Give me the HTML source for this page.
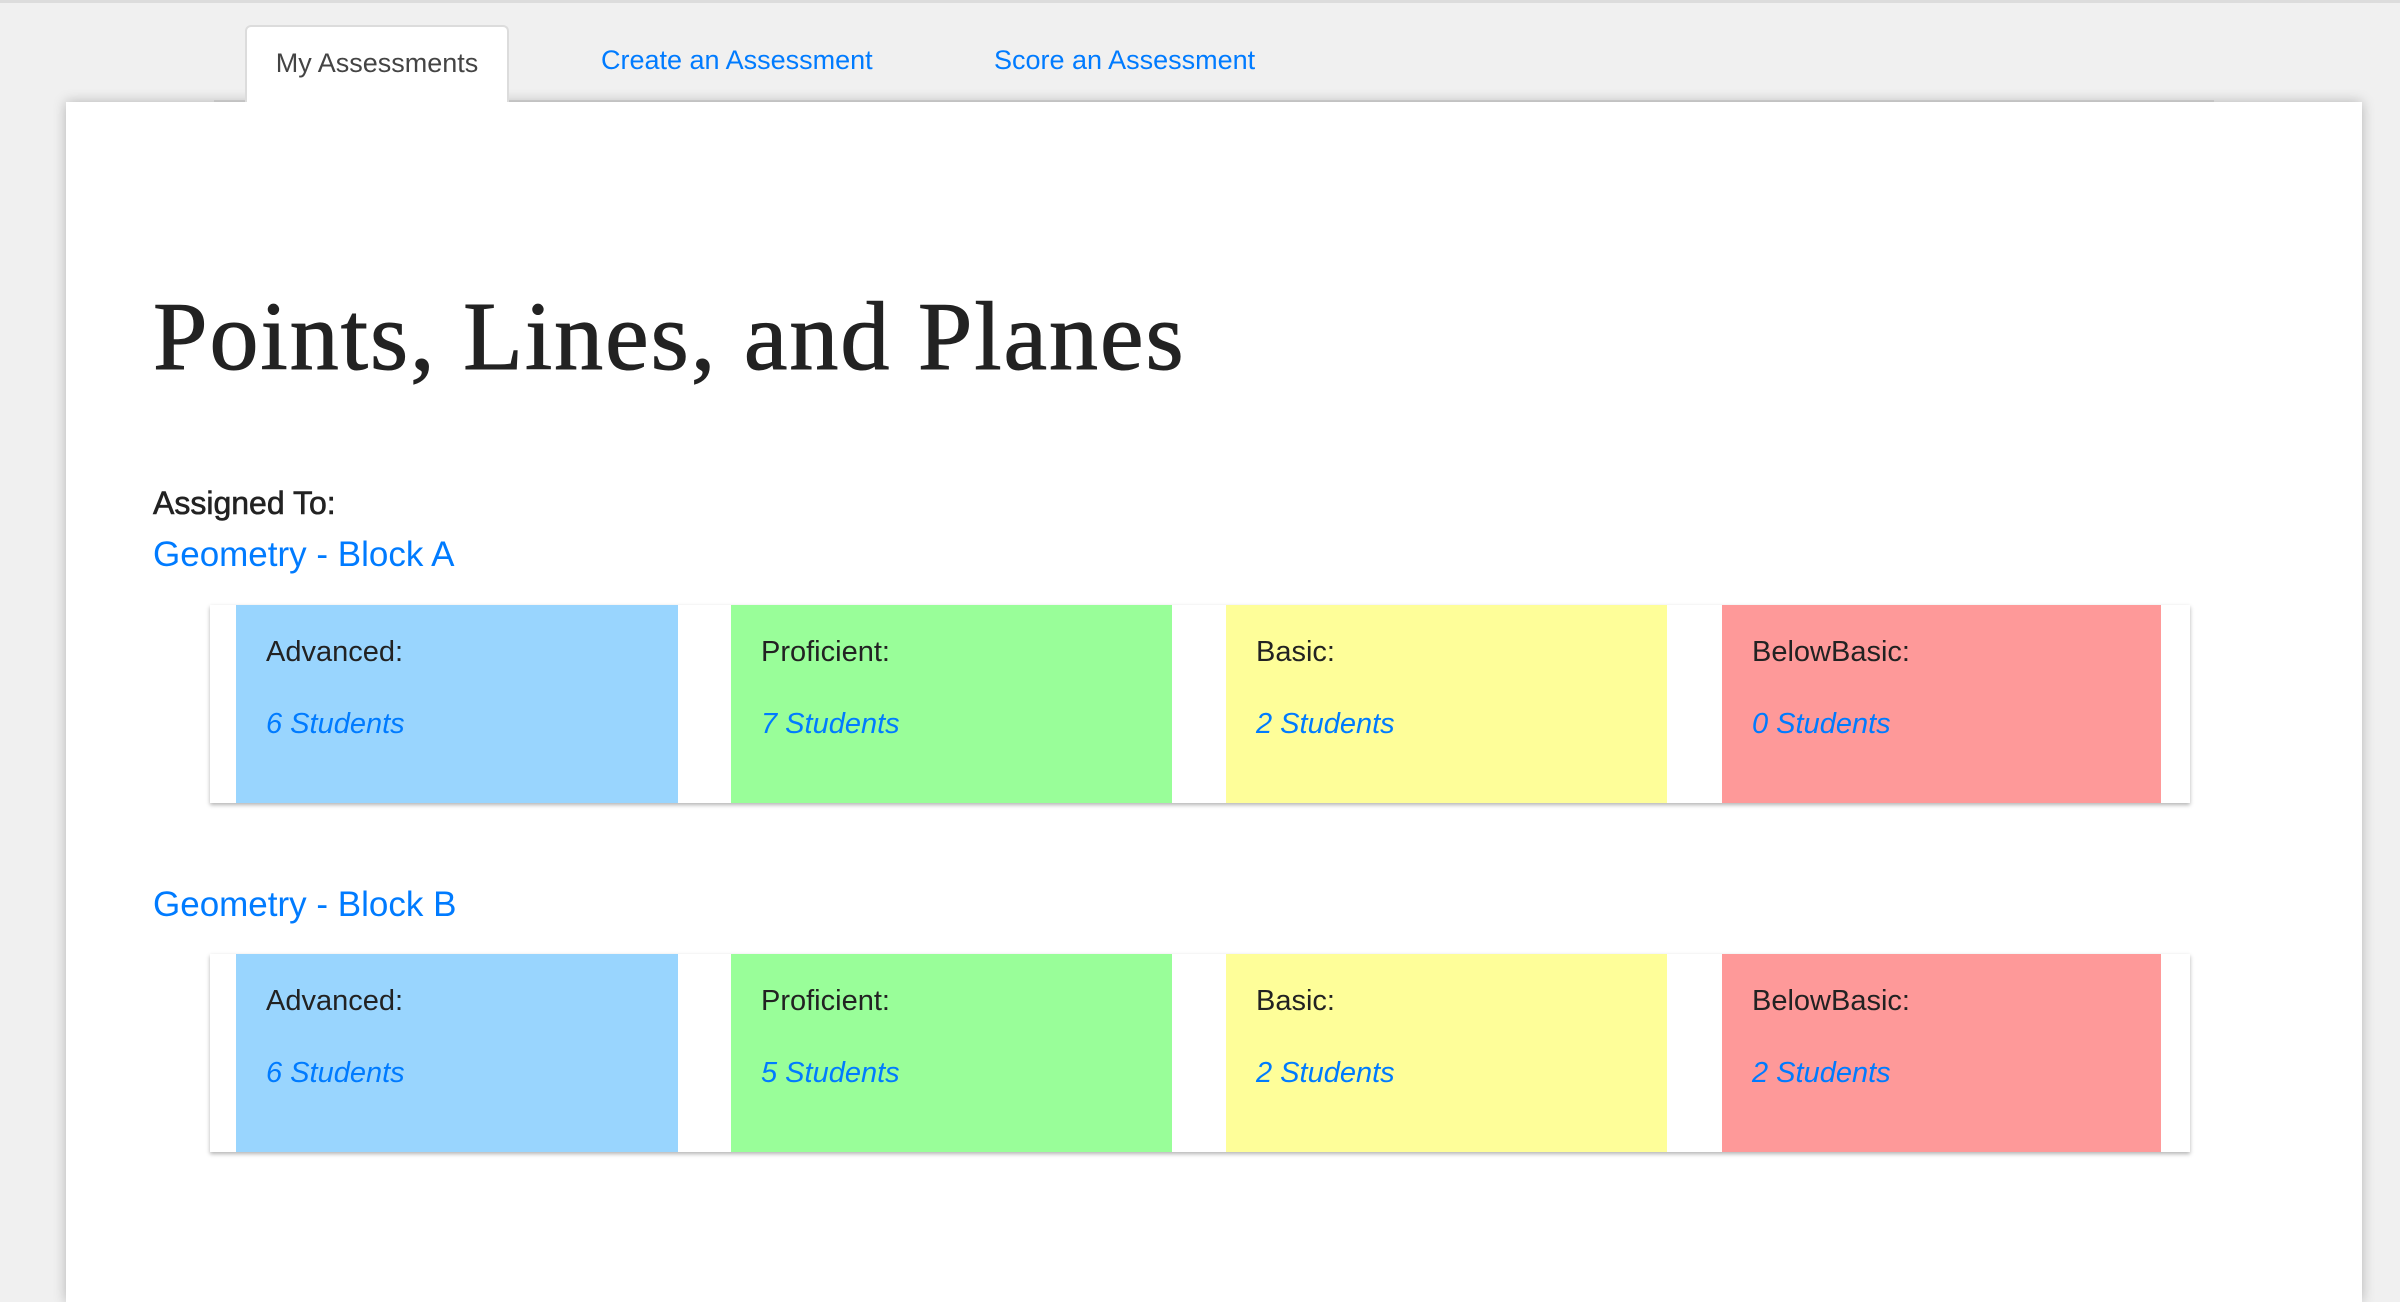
<!DOCTYPE html>
<html><head><style>
body{margin:0;width:2400px;height:1278px;background:#f0f0f0;font-family:"Liberation Sans",sans-serif;overflow:hidden;position:relative}
.topline{position:absolute;left:0;top:0;width:2400px;height:3px;background:#dcdcdc}
.tabline{position:absolute;left:214px;top:100px;width:2000px;height:2px;background:#dcdcdc}
.tab{position:absolute;top:40px;font-size:27px;line-height:40px;color:#007bff}
.tab.active{left:245px;top:25px;width:264px;height:77px;background:#fff;border:2px solid #dcdcdc;border-bottom:none;border-radius:6px 6px 0 0;color:#444;text-align:center;line-height:72px;box-sizing:border-box}
.panel{position:absolute;left:66px;top:102px;width:2296px;height:1200px;background:#fff;box-shadow:0 0 12px rgba(0,0,0,.25)}
h1{position:absolute;left:153px;top:281px;margin:0;font-family:"Liberation Serif",serif;font-weight:normal;font-size:98px;color:#222;letter-spacing:2px;-webkit-text-stroke:1px #222}
.lbl{position:absolute;left:153px;font-size:32px;color:#222;-webkit-text-stroke:0.6px #222}
.link{position:absolute;left:153px;font-size:35px;color:#007bff}
.card{position:absolute;left:210px;width:1980px;height:198px;background:#fff;box-shadow:0 2px 4px rgba(0,0,0,.3)}
.box{position:absolute;top:0;height:198px}
.box .t{position:absolute;left:30px;top:31px;font-size:29px;color:#222}
.box .s{position:absolute;left:30px;top:103px;font-size:29px;color:#007bff;font-style:italic}
</style></head><body>
<div class="topline"></div>
<div class="tabline"></div>
<div class="panel"></div>
<div class="tab active">My Assessments</div>
<div class="tab" style="left:601px">Create an Assessment</div>
<div class="tab" style="left:994px">Score an Assessment</div>
<h1>Points, Lines, and Planes</h1>
<div class="lbl" style="top:485px">Assigned To:</div>
<div class="link" style="top:535px">Geometry - Block A</div>
<div class="card" style="top:605px">
 <div class="box" style="left:26px;width:442px;background:#99d5fe"><div class="t">Advanced:</div><div class="s">6 Students</div></div>
 <div class="box" style="left:521px;width:441px;background:#99fe99"><div class="t">Proficient:</div><div class="s">7 Students</div></div>
 <div class="box" style="left:1016px;width:441px;background:#fefe99"><div class="t">Basic:</div><div class="s">2 Students</div></div>
 <div class="box" style="left:1512px;width:439px;background:#fe9999"><div class="t">BelowBasic:</div><div class="s">0 Students</div></div>
</div>
<div class="link" style="top:885px">Geometry - Block B</div>
<div class="card" style="top:954px">
 <div class="box" style="left:26px;width:442px;background:#99d5fe"><div class="t">Advanced:</div><div class="s">6 Students</div></div>
 <div class="box" style="left:521px;width:441px;background:#99fe99"><div class="t">Proficient:</div><div class="s">5 Students</div></div>
 <div class="box" style="left:1016px;width:441px;background:#fefe99"><div class="t">Basic:</div><div class="s">2 Students</div></div>
 <div class="box" style="left:1512px;width:439px;background:#fe9999"><div class="t">BelowBasic:</div><div class="s">2 Students</div></div>
</div>
</body></html>
